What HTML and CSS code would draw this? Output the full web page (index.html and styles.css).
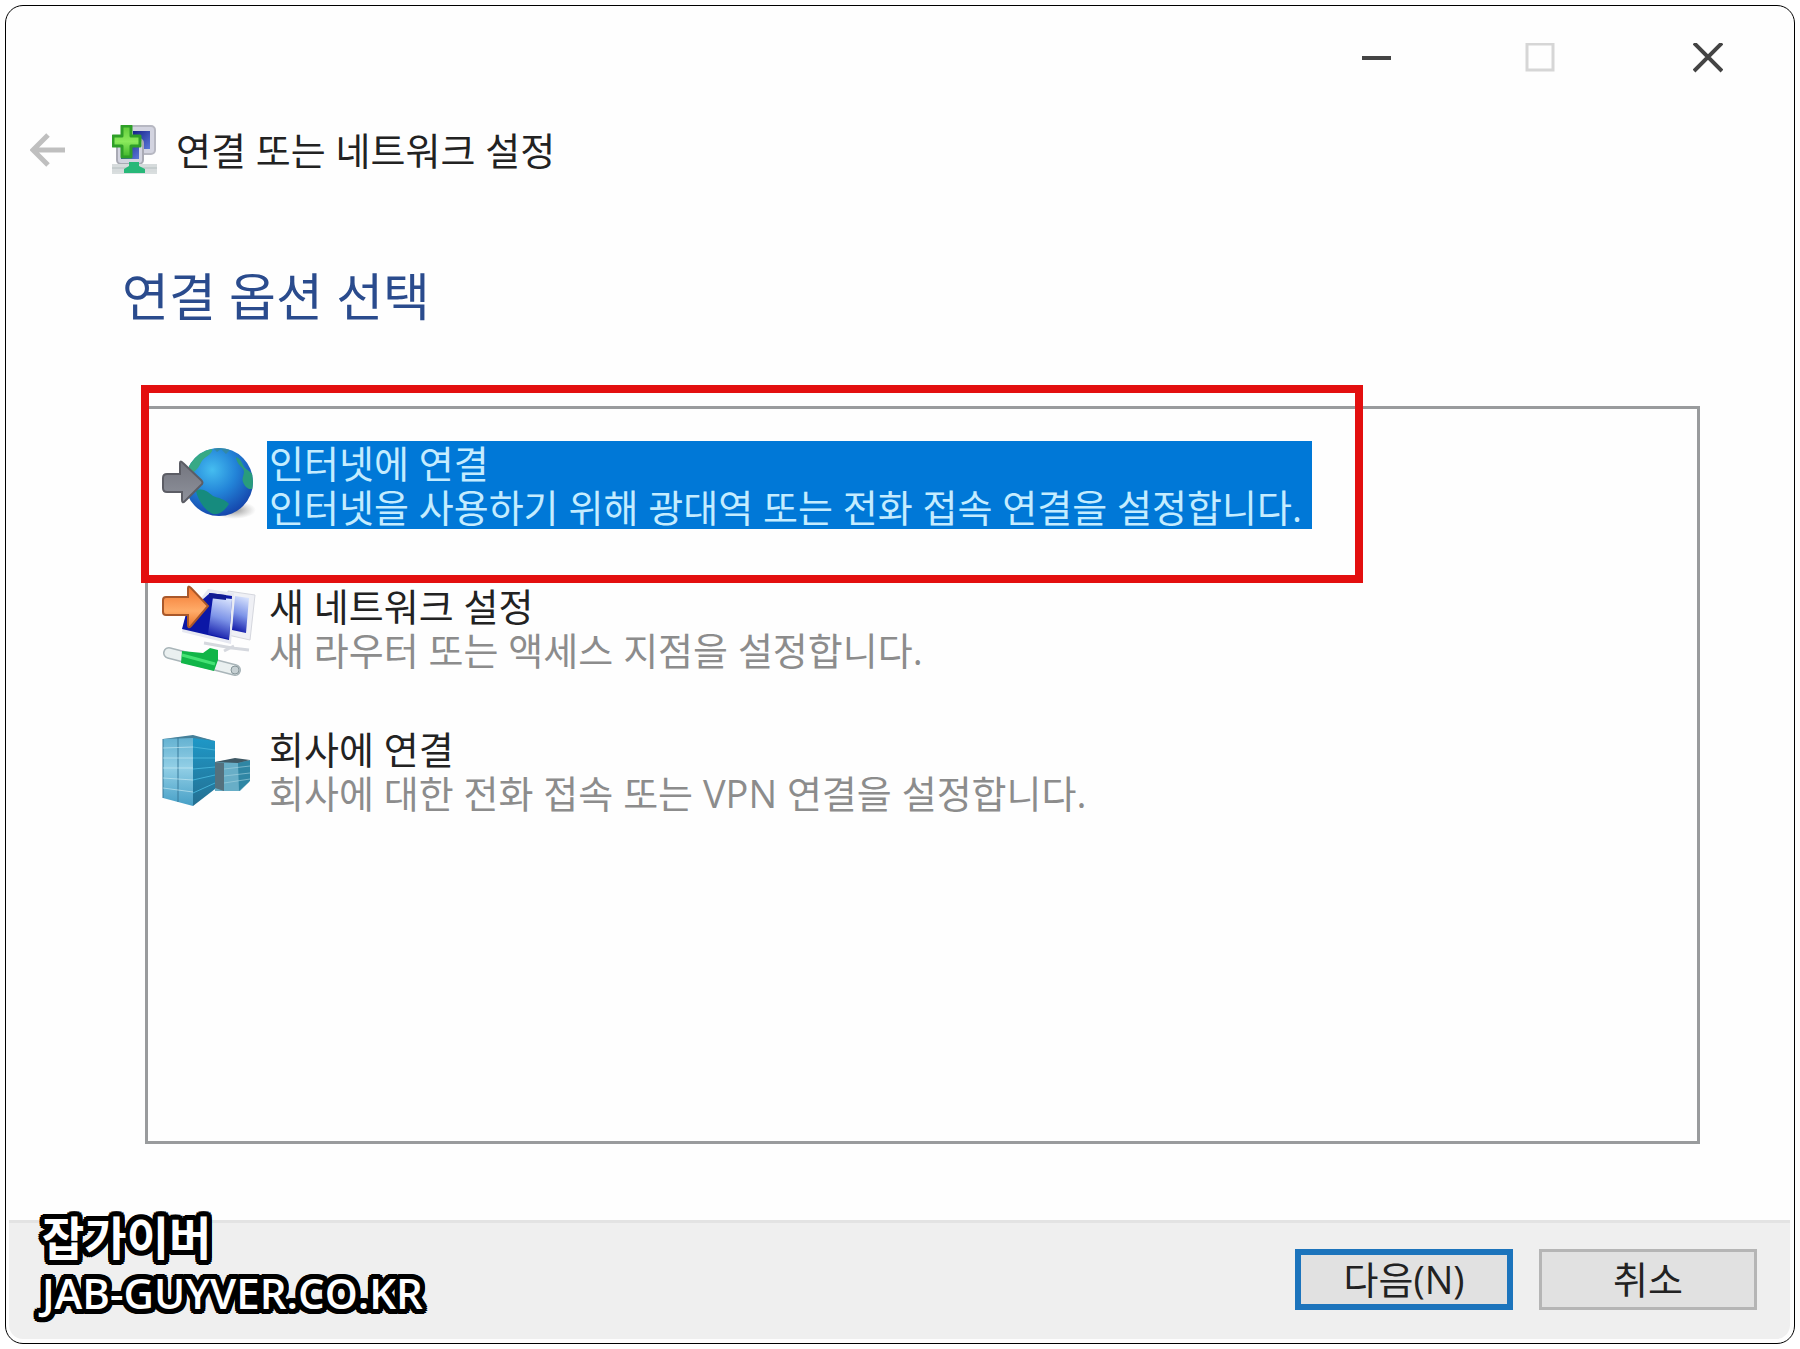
FILE: index.html
```html
<!DOCTYPE html>
<html lang="ko">
<head>
    <meta charset="UTF-8">
    <meta name="viewport" content="width=device-width, initial-scale=1.0">
    <title>연결 또는 네트워크 설정</title>
    <link rel="stylesheet" href="styles.css">
</head>
<body>
    <div class="window">
        <div class="title-bar">
            <button class="window-button" aria-label="최소화">
                <svg width="30" height="30" viewBox="0 0 30 30"><path d="M1 15h29" stroke="#444" stroke-width="4"/></svg>
            </button>
            <button class="window-button" aria-label="최대화" disabled>
                <svg width="30" height="30" viewBox="0 0 30 30"><rect x="2" y="1" width="26" height="26" fill="none" stroke="#d6d6d6" stroke-width="3"/></svg>
            </button>
            <button class="window-button window-close" aria-label="닫기">
                <svg width="30" height="30" viewBox="0 0 30 30"><path d="M1 0l28 28M29 0L1 28" stroke="#444" stroke-width="4"/></svg>
            </button>
        </div>

        <header>
            <button class="back-button" aria-label="뒤로" disabled>
                <svg width="36" height="34" viewBox="0 0 36 34"><path d="M18 2L3 17l15 15M3 17h32" fill="none" stroke="#bfbfbf" stroke-width="5"/></svg>
            </button>
            <svg class="wizard-icon" width="46" height="50" viewBox="0 0 46 50">
                <defs>
                    <linearGradient id="plus" x1="0" y1="0" x2="0" y2="1">
                        <stop offset="0" stop-color="#5fc93a"/>
                        <stop offset=".5" stop-color="#8bea5c"/>
                        <stop offset="1" stop-color="#3fb52a"/>
                    </linearGradient>
                    <linearGradient id="navy" x1="0" y1="0" x2="1" y2="1">
                        <stop offset="0" stop-color="#16208a"/>
                        <stop offset="1" stop-color="#5a78d8"/>
                    </linearGradient>
                </defs>
                <rect x="17" y="1" width="26" height="28" rx="4" fill="#d3d4e0" stroke="#b7b8c2" stroke-width="2"/>
                <rect x="21" y="6" width="17" height="18" fill="url(#navy)"/>
                <rect x="5" y="14" width="26" height="25" rx="4" fill="#d3d4e0" stroke="#a9aab4" stroke-width="2"/>
                <rect x="9" y="17" width="18" height="17" fill="url(#navy)"/>
                <path d="M0 43h45" stroke="#d6dbdc" stroke-width="8"/>
                <path d="M0 43h45M0 48h45" stroke="#b4bebf" stroke-width="1"/>
                <path d="M17 37h10v4l6 3v4H12v-4l5-3z" fill="#27b878"/>
                <path d="M10 1h9v10h9v10h-9v11h-9V21H1V11h9z" fill="url(#plus)" stroke="#2f9f28" stroke-width="3" stroke-linejoin="round"/>
            </svg>
            <span class="wizard-name">연결 또는 네트워크 설정</span>
        </header>

        <main>
            <h1>연결 옵션 선택</h1>
            <ul class="options">
                <li class="highlighted">
                    <button class="option selected">
                        <svg width="94" height="92" viewBox="0 0 94 92">
                            <defs>
                                <radialGradient id="sea" cx=".4" cy=".32" r=".7">
                                    <stop offset="0" stop-color="#45bdf0"/>
                                    <stop offset=".5" stop-color="#2384d8"/>
                                    <stop offset="1" stop-color="#1546ac"/>
                                </radialGradient>
                                <linearGradient id="steel" x1="0" y1="0" x2="0" y2="1">
                                    <stop offset="0" stop-color="#73757e"/>
                                    <stop offset="1" stop-color="#8f929c"/>
                                </linearGradient>
                                <radialGradient id="shade">
                                    <stop offset="0" stop-color="#777" stop-opacity=".8"/>
                                    <stop offset="1" stop-color="#999" stop-opacity="0"/>
                                </radialGradient>
                                <clipPath id="globe"><circle cx="57" cy="41" r="34"/></clipPath>
                            </defs>
                            <ellipse cx="72" cy="69" rx="22" ry="9" fill="url(#shade)"/>
                            <circle cx="57" cy="41" r="34" fill="url(#sea)"/>
                            <g clip-path="url(#globe)">
                                <path d="M24 33c3-14 12-22 24-27 5 2 1 7-4 10-6 4-5 8-9 12s-6 6-11 5z" fill="#37a985"/>
                                <path d="M50 6l5 5 4-3 5 5 4-4-5-4z" fill="#3289a6"/>
                                <path d="M34 50c6-4 12 1 17 5 5 2 12 3 16 8-4 6-9 11-16 10-8-3-15-14-17-23z" fill="#168b7e"/>
                                <path d="M74 16c6 2 6 8 9 11l9 7v13c-5 3-9-1-11-6-2-5 3-9 0-13-3-4-6-5-7-12z" fill="#299c7c"/>
                            </g>
                            <path d="M5 33h13V22q0-3 3 0l18 17q3 3 0 5L23 60q-3 3-3-1V51H5q-4 0-4-4V37q0-4 4-4z" fill="url(#steel)" stroke="#5c5d65" stroke-width="2"/>
                        </svg>
                        <span class="option-text">
                            <span class="option-title">인터넷에 연결</span>
                            <span class="option-desc">인터넷을 사용하기 위해 광대역 또는 전화 접속 연결을 설정합니다.</span>
                        </span>
                    </button>
                </li>
                <li>
                    <button class="option">
                        <svg width="94" height="92" viewBox="0 0 94 92">
                            <defs>
                                <linearGradient id="orange" x1="0" y1="0" x2="0" y2="1">
                                    <stop offset="0" stop-color="#f1742d"/>
                                    <stop offset=".6" stop-color="#ffac69"/>
                                    <stop offset="1" stop-color="#ec7629"/>
                                </linearGradient>
                                <linearGradient id="screen" x1=".6" y1="0" x2=".4" y2="1">
                                    <stop offset="0" stop-color="#d5e0fc"/>
                                    <stop offset=".5" stop-color="#7d94e8"/>
                                    <stop offset="1" stop-color="#1018a8"/>
                                </linearGradient>
                            </defs>
                            <path d="M66 7l27 4-5 45-22-5z" fill="#eff0f5" stroke="#d5d7de" stroke-width="1"/>
                            <path d="M73 12l14 2-3 35-14-3z" fill="url(#screen)"/>
                            <path d="M46 5l26 4-3 51-49-12 2-12z" fill="#e6e8f1"/>
                            <path d="M24 30l24-21 22 3-3 44-47-11z" fill="#0b17a6"/>
                            <path d="M51 13l19 2-3 40-21-5z" fill="url(#screen)"/>
                            <path d="M47 9l17 2v5l-17-2z" fill="#111b92"/>
                            <path d="M42 59l28 5 17 2M62 67l10-5" fill="none" stroke="#d5d8de" stroke-width="3"/>
                            <path d="M7 69l66 17" stroke="#a9b5b9" stroke-width="12" stroke-linecap="round"/>
                            <path d="M7 69l66 17" stroke="#eaf0f0" stroke-width="9" stroke-linecap="round"/>
                            <circle cx="73" cy="86" r="4" fill="#c6d0d3" stroke="#87969a"/>
                            <path d="M20 67l21 2 7-5 8 2v10l-4 11-33-8z" fill="#11b548"/>
                            <path d="M20 71l33 9" stroke="#45e274" stroke-width="3"/>
                            <path d="M4 13h22V4q0-3 3 0l17 18-17 20q-3 3-3-1V31H4q-3 0-3-3V16q0-3 3-3z" fill="url(#orange)" stroke="#a9582a" stroke-width="2"/>
                        </svg>
                        <span class="option-text">
                            <span class="option-title">새 네트워크 설정</span>
                            <span class="option-desc">새 라우터 또는 액세스 지점을 설정합니다.</span>
                        </span>
                    </button>
                </li>
                <li>
                    <button class="option">
                        <svg width="94" height="92" viewBox="0 0 94 92">
                            <defs>
                                <linearGradient id="glass" x1="0" y1="0" x2="0" y2="1">
                                    <stop offset="0" stop-color="#62b0d0"/>
                                    <stop offset=".45" stop-color="#92cfe6"/>
                                    <stop offset="1" stop-color="#469fc6"/>
                                </linearGradient>
                                <linearGradient id="side" x1="0" y1="0" x2="0" y2="1">
                                    <stop offset="0" stop-color="#1e99c9"/>
                                    <stop offset="1" stop-color="#246f91"/>
                                </linearGradient>
                            </defs>
                            <path d="M53 35l20-3 14 2v21L78 64H53z" fill="#68aec7"/>
                            <path d="M76 36l12-3v21l-11 10z" fill="#2f86a4"/>
                            <path d="M53 35l20-4 15 2-12 3z" fill="#3f5965"/>
                            <path d="M53 35l9 1v28l-9-3z" fill="#54717e"/>
                            <path d="M62 42l26-3M62 49l26-3M62 56l26-4" stroke="#a6d5e2" stroke-width="1" opacity=".6"/>
                            <path d="M1 12l30-3v70L1 71z" fill="url(#glass)"/>
                            <path d="M31 9l22 5v48L31 79z" fill="url(#side)"/>
                            <path d="M1 12l30-4 22 6-22-3z" fill="#457f99"/>
                            <path d="M1 12v59M16 11v64" stroke="#387b9b" stroke-width="1"/>
                            <path d="M1 21l30-1M1 31h30M1 41h30M1 51l30 2M1 61l30 4" stroke="#cfeff7" stroke-width="1" opacity=".6"/>
                            <path d="M31 20l22 3M31 31h22M31 42l22-2M31 53l22-5M31 66l22-10" stroke="#43b0d5" stroke-width="1"/>
                        </svg>
                        <span class="option-text">
                            <span class="option-title">회사에 연결</span>
                            <span class="option-desc">회사에 대한 전화 접속 또는 VPN 연결을 설정합니다.</span>
                        </span>
                    </button>
                </li>
            </ul>
        </main>

        <footer>
            <div class="brand">
                <span class="brand-name">잡가이버</span>
                <span class="brand-site">JAB-GUYVER.CO.KR</span>
            </div>
            <div class="actions">
                <button class="action primary">다음(N)</button>
                <button class="action">취소</button>
            </div>
        </footer>
    </div>
</body>
</html>
```
FILE: styles.css
```css
* {
    box-sizing: border-box;
}

body {
    margin: 0;
    min-height: 100vh;
    padding: 5px;
    display: flex;
    background: #fff;
    color: #222;
    font-family: "Open Sans", "Noto Sans CJK KR", sans-serif;
    font-size: 38px;
    line-height: 44px;
}

button {
    padding: 0;
    border: none;
    background: none;
    color: inherit;
    font: inherit;
    cursor: pointer;
}

svg {
    display: block;
    flex: none;
}

.window {
    flex: 1;
    display: flex;
    flex-direction: column;
    border: 1px solid #000;
    border-radius: 18px;
    background: #fefefe;
}

/* Title bar */
.title-bar {
    display: flex;
    justify-content: flex-end;
}

.window-button {
    width: 164px;
    height: 103px;
    display: flex;
    justify-content: center;
    align-items: center;
}

.window-close {
    width: 172px;
}

/* Wizard name */
header {
    display: flex;
    align-items: center;
    height: 82px;
    padding-left: 24px;
}

.wizard-icon {
    margin-left: 46px;
}

.wizard-name {
    margin-left: 18px;
}

main {
    flex: 1;
    display: flex;
    flex-direction: column;
    padding: 73px 94px 76px 116px;
}

h1 {
    margin: 0;
    color: #2a4b8d;
    font-size: 51px;
    font-weight: 400;
    line-height: 64px;
}

/* Option list */
.options {
    flex: 1;
    display: flex;
    flex-direction: column;
    align-items: flex-start;
    gap: 51px;
    margin: 78px 0 0 23px;
    padding: 32px 14px;
    border: 3px solid #999b9d;
    list-style: none;
}

.option {
    display: flex;
    gap: 11px;
    text-align: left;
}

.option-text {
    display: flex;
    flex-direction: column;
    height: 88px;
    padding: 0 10px 0 2px;
}

.option-desc {
    color: #8c8c8c;
}

.selected .option-text {
    background: #0078d7;
}

.selected .option-title,
.selected .option-desc {
    color: #c4ecff;
}

/* Red marker around the first option */
.highlighted {
    position: relative;
}

.highlighted::after {
    content: "";
    position: absolute;
    inset: -56px -51px -50px -21px;
    border: 8px solid #e30f0f;
    pointer-events: none;
}

/* Footer */
footer {
    display: flex;
    justify-content: space-between;
    align-items: center;
    height: 119px;
    margin: 0 4px 4px 3px;
    padding: 0 33px 4px;
    border-top: 3px solid #e3e3e3;
    border-radius: 0 0 14px 14px;
    background: #efefef;
}

.brand {
    display: flex;
    flex-direction: column;
    align-self: flex-start;
    margin-top: -14px;
    color: #fff;
    font-size: 42px;
    font-weight: 600;
    line-height: 56px;
    text-shadow:
        5px 0 #000, -5px 0 #000, 0 5px #000, 0 -5px #000,
        4px 4px #000, -4px 4px #000, 4px -4px #000, -4px -4px #000,
        5px 2px #000, -5px 2px #000, 5px -2px #000, -5px -2px #000,
        2px 5px #000, -2px 5px #000, 2px -5px #000, -2px -5px #000;
}

.brand-name {
    font-size: 46px;
    font-weight: 700;
}

.actions {
    display: flex;
    gap: 26px;
}

.action {
    width: 218px;
    height: 61px;
    border: 3px solid #b5b5b5;
    background: #e1e1e1;
    line-height: 40px;
}

.primary {
    border: 6px solid #1c74bc;
}
```
